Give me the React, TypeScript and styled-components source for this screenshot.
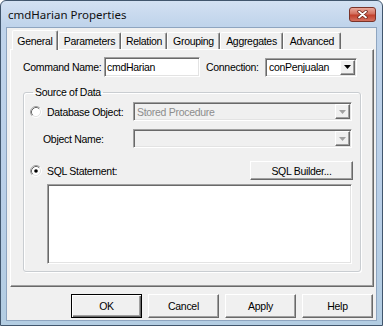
import React from 'react';
import styled, { createGlobalStyle, css } from 'styled-components';

const GlobalStyle = createGlobalStyle`
  html, body {
    margin: 0;
    padding: 0;
    background: #fff;
  }
`;

const ui = css`
  font-family: 'Liberation Sans', Arial, sans-serif;
  font-size: 10.5px;
  letter-spacing: -0.3px;
  color: #000;
`;

const sunken = css`
  box-sizing: border-box;
  border: 1px solid;
  border-color: #a0a0a0 #fff #fff #a0a0a0;
  box-shadow: inset 1px 1px 0 #696969, inset -1px -1px 0 #e3e3e3;
  padding: 1px;
`;

const raised = css`
  box-sizing: border-box;
  background: #f0f0f0;
  border: 1px solid;
  border-color: #fff #696969 #696969 #fff;
  box-shadow: inset -1px -1px 0 #a0a0a0;
`;

const tabs = [
  { label: 'General', width: 46 },
  { label: 'Parameters', width: 63 },
  { label: 'Relation', width: 46 },
  { label: 'Grouping', width: 53 },
  { label: 'Aggregates', width: 63 },
  { label: 'Advanced', width: 58 },
];

const RadioIcon: React.FC<{ checked?: boolean }> = ({ checked }) => (
  <svg width="12" height="12" viewBox="0 0 12 12">
    <circle cx="6" cy="6" r="5" fill="#fff" />
    <path d="M2.11 9.89A5.5 5.5 0 0 1 9.89 2.11" fill="none" stroke="#a0a0a0" />
    <path d="M2.82 9.18A4.5 4.5 0 0 1 9.18 2.82" fill="none" stroke="#696969" />
    <path d="M9.89 2.11A5.5 5.5 0 0 1 2.11 9.89" fill="none" stroke="#fff" />
    <path d="M9.18 2.82A4.5 4.5 0 0 1 2.82 9.18" fill="none" stroke="#e3e3e3" />
    {checked && <circle cx="6" cy="6" r="1.8" fill="#000" />}
  </svg>
);

const Combo: React.FC<{ value?: string; width: number; disabled?: boolean }> = ({ value, width, disabled }) => (
  <ComboField $width={width} $disabled={disabled}>
    <ComboText $disabled={disabled}>{value}</ComboText>
    <DropButton>
      <svg width="7" height="4" viewBox="0 0 7 4">
        <path d="M0 0H7L3.5 4Z" fill={disabled ? '#a0a0a0' : '#000'} />
      </svg>
    </DropButton>
  </ComboField>
);

export default function App() {
  return (
    <>
      <GlobalStyle />
      <Window>
        <TitleBar>
          <Title>cmdHarian Properties</Title>
          <CloseButton aria-label="Close">
            <svg width="11" height="9" viewBox="0 0 11 9">
              <path d="M2 1.5L9 7.5M9 1.5L2 7.5" stroke="#6b2219" strokeWidth="3.4" strokeLinecap="round" />
              <path d="M2 1.5L9 7.5M9 1.5L2 7.5" stroke="#fff" strokeWidth="1.8" strokeLinecap="round" />
            </svg>
          </CloseButton>
        </TitleBar>

        <Client>
          <TabStrip>
            {tabs.map((t, i) => (
              <Tab key={t.label} $width={t.width} $active={i === 0}>
                {t.label}
              </Tab>
            ))}
          </TabStrip>

          <Panel>
            <TopRow>
              <Label $width={81}>Command Name:</Label>
              <TextInput $width={96}>cmdHarian</TextInput>
              <Label $width={59} $gap={6}>Connection:</Label>
              <Combo value="conPenjualan" width={92} />
            </TopRow>

            <Group>
              <Legend>Source of Data</Legend>
              <GroupRow>
                <RadioBox>
                  <RadioIcon />
                </RadioBox>
                <Label>Database Object:</Label>
                <Spacer />
                <Combo value="Stored Procedure" width={219} disabled />
              </GroupRow>
              <GroupRow $gap={8}>
                <Label $indent={13}>Object Name:</Label>
                <Spacer />
                <Combo width={219} disabled />
              </GroupRow>
              <GroupRow $gap={13}>
                <RadioBox>
                  <RadioIcon checked />
                </RadioBox>
                <Label>SQL Statement:</Label>
                <Spacer />
                <SmallButton>SQL Builder...</SmallButton>
              </GroupRow>
              <SqlBox />
            </Group>
          </Panel>

          <ButtonRow>
            <Button $default>OK</Button>
            <Button>Cancel</Button>
            <Button>Apply</Button>
            <Button>Help</Button>
          </ButtonRow>
        </Client>
      </Window>
    </>
  );
}

const Window = styled.div`
  box-sizing: border-box;
  width: 383px;
  height: 326px;
  border: 1px solid #41566d;
  border-radius: 6px 6px 0 0;
  background: linear-gradient(#d3e1f2, #c0d4eb 24px, #b9cfe8 60%, #b3cde2);
  padding: 0 5px 4px 5px;
  display: flex;
  flex-direction: column;
`;

const TitleBar = styled.div`
  height: 27px;
  margin: 0 -5px;
  padding: 0 6px 0 7px;
  display: flex;
  align-items: center;
  justify-content: space-between;
`;

const Title = styled.span`
  font-family: 'Noto Sans', 'Open Sans', sans-serif;
  font-size: 11.5px;
  color: #111;
`;

const CloseButton = styled.div`
  box-sizing: border-box;
  width: 27px;
  height: 15px;
  border: 1px solid #7a3329;
  border-radius: 3px;
  background: linear-gradient(#e9a99b, #d3705f 45%, #c2402c 55%, #d3705f);
  display: flex;
  align-items: center;
  justify-content: center;
`;

const Client = styled.div`
  flex: 1;
  display: flex;
  flex-direction: column;
  border: 1px solid #8ea5c0;
  background: #f0f0f0;
  padding: 2px 2px 2px 3px;
`;

const TabStrip = styled.div`
  height: 19px;
  padding-left: 2px;
  display: flex;
  align-items: flex-end;
`;

const Tab = styled.div<{ $width: number; $active?: boolean }>`
  ${ui}
  box-sizing: border-box;
  width: ${(p) => p.$width}px;
  height: ${(p) => (p.$active ? 20 : 17)}px;
  margin-bottom: ${(p) => (p.$active ? -1 : 0)}px;
  position: relative;
  z-index: ${(p) => (p.$active ? 1 : 0)};
  background: #f0f0f0;
  border: 1px solid;
  border-bottom: none;
  border-color: #fff #696969 transparent #fff;
  border-radius: 2px 2px 0 0;
  box-shadow: inset -1px 0 0 #a0a0a0;
  display: flex;
  align-items: center;
  justify-content: center;
`;

const Panel = styled.div`
  box-sizing: border-box;
  height: 238px;
  border: 1px solid;
  border-color: #fff #696969 #696969 #fff;
  box-shadow: inset -1px -1px 0 #a0a0a0;
  padding: 7px 0 0 12px;
  display: flex;
  flex-direction: column;
`;

const TopRow = styled.div`
  height: 20px;
  display: flex;
  align-items: center;
`;

const Label = styled.span<{ $width?: number; $gap?: number; $indent?: number }>`
  ${ui}
  white-space: nowrap;
  ${(p) => p.$width && `width: ${p.$width}px; flex: none;`}
  margin-left: ${(p) => p.$gap ?? 0}px;
  padding-left: ${(p) => p.$indent ?? 0}px;
`;

const TextInput = styled.div<{ $width: number }>`
  ${ui}
  ${sunken}
  width: ${(p) => p.$width}px;
  height: 20px;
  background: #fff;
  padding: 1px 2px;
  display: flex;
  align-items: center;
`;

const ComboField = styled.div<{ $width: number; $disabled?: boolean }>`
  ${sunken}
  width: ${(p) => p.$width}px;
  height: 19px;
  background: ${(p) => (p.$disabled ? '#f0f0f0' : '#fff')};
  display: flex;
  align-items: stretch;
`;

const ComboText = styled.span<{ $disabled?: boolean }>`
  ${ui}
  flex: 1;
  padding-left: 2px;
  display: flex;
  align-items: center;
  color: ${(p) => (p.$disabled ? '#8d8d8d' : '#000')};
`;

const DropButton = styled.div`
  ${raised}
  width: 15px;
  display: flex;
  align-items: center;
  justify-content: center;
`;

const Group = styled.fieldset`
  box-sizing: border-box;
  width: 338px;
  margin: 8px 0 0 0;
  padding: 3px 8px 7px 6px;
  border: 1px solid #c9cdd1;
  border-radius: 3px;
  box-shadow: inset 1px 1px 0 #fff, 1px 1px 0 #fff;
  display: flex;
  flex-direction: column;
`;

const Legend = styled.legend`
  ${ui}
  line-height: 14px;
  margin-left: 3px;
  padding: 0 2px;
`;

const GroupRow = styled.div<{ $gap?: number }>`
  height: 19px;
  margin-top: ${(p) => p.$gap ?? 0}px;
  display: flex;
  align-items: center;
`;

const RadioBox = styled.span`
  width: 12px;
  height: 12px;
  margin-right: 5px;
  display: flex;
`;

const Spacer = styled.span`
  flex: 1;
`;

const SmallButton = styled.div`
  ${ui}
  ${raised}
  width: 103px;
  height: 19px;
  margin-right: -1px;
  display: flex;
  align-items: center;
  justify-content: center;
`;

const SqlBox = styled.div`
  ${sunken}
  width: 305px;
  height: 80px;
  margin: 4px 0 0 17px;
  background: #fff;
`;

const ButtonRow = styled.div`
  margin-top: 7px;
  padding-right: 1px;
  display: flex;
  justify-content: flex-end;
  gap: 6px;
`;

const Button = styled.div<{ $default?: boolean }>`
  ${ui}
  ${raised}
  width: 71px;
  height: 24px;
  display: flex;
  align-items: center;
  justify-content: center;
  ${(p) =>
    p.$default &&
    css`
      border-color: #000;
      box-shadow: inset 1px 1px 0 #fff, inset -1px -1px 0 #696969, inset -2px -2px 0 #a0a0a0;
    `}
`;
